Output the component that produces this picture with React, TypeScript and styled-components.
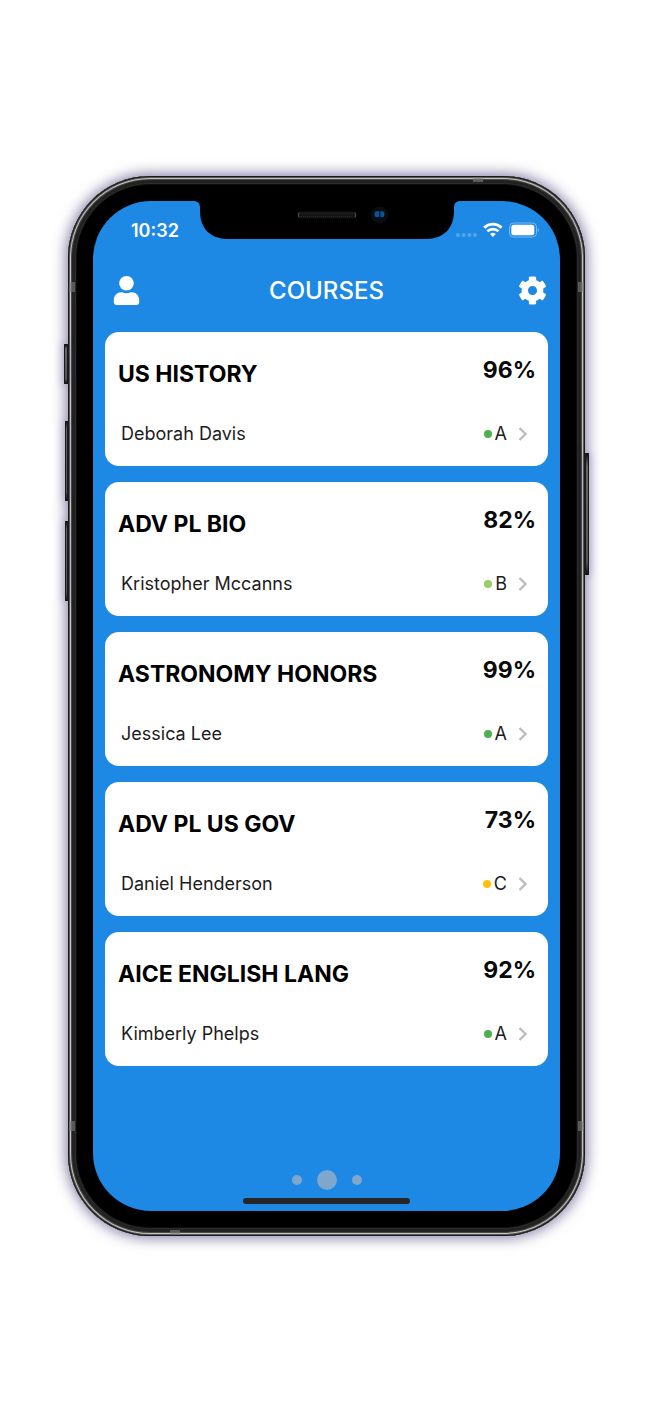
import React from "react";
import styled, { createGlobalStyle } from "styled-components";
import { FaCog, FaUser } from "react-icons/fa";

const GlobalStyle = createGlobalStyle`
  *, *::before, *::after { box-sizing: border-box; }
  body {
    margin: 0;
    background: #fff;
    font-family: Inter, "Liberation Sans", sans-serif;
    -webkit-font-smoothing: antialiased;
  }
`;

const Page = styled.div`
  padding: 176px 67px 175px 68px;
`;

const Phone = styled.div`
  position: relative;
  padding: 25px;
  border-radius: 82px;
  background: #000;
  box-shadow:
    inset 0 0 0 1px #1a1a1a,
    inset 0 0 0 2px #5a5a5a,
    inset 0 0 0 3px #c4c3bd,
    inset 0 0 0 4px #4a4a48,
    inset 0 0 0 7px #222,
    inset 0 0 0 8px #2c2c2c,
    inset 0 0 0 9px #0c0c0c,
    0 0 14px 2px rgba(50, 35, 100, 0.6);
`;

const SideKey = styled.span<{ $side: "left" | "right"; $top: number; $length: number; $depth: number }>`
  position: absolute;
  ${(p) => p.$side}: -${(p) => p.$depth}px;
  top: ${(p) => p.$top}px;
  width: ${(p) => p.$depth}px;
  height: ${(p) => p.$length}px;
  border: 1px solid #1a1a1a;
  background: linear-gradient(#111, #666 10%, #555 90%, #111);
  box-shadow: 0 0 10px rgba(60, 45, 110, 0.4);
`;

const Antenna = styled.span<{ $edge: "left" | "right" | "top" | "bottom"; $offset: number }>`
  position: absolute;
  background: rgba(120, 120, 120, 0.65);
  ${(p) => p.$edge}: 1px;
  ${(p) =>
    p.$edge === "left" || p.$edge === "right"
      ? `top: ${p.$offset}px; width: 6px; height: 10px;`
      : `left: ${p.$offset}px; width: 10px; height: 5px;`}
`;

const Screen = styled.main`
  position: relative;
  display: flex;
  flex-direction: column;
  padding: 0 12px;
  border-radius: 58px;
  background: #1e88e5;
  overflow: hidden;
`;

const Notch = styled.svg`
  position: absolute;
  top: 0;
  left: 50%;
  width: 268px;
  height: 38px;
  margin-left: -134px;
`;

const StatusBar = styled.div`
  display: flex;
  align-items: center;
  justify-content: space-between;
  height: 58px;
  padding: 0 9px 0 26px;
  color: #fff;
`;

const Clock = styled.time`
  padding-top: 2px;
  font-size: 18px;
  font-weight: 600;
  line-height: 24px;
`;

const StatusIcons = styled.svg`
  width: 84px;
  height: 18px;
`;

const Header = styled.header`
  display: grid;
  grid-template-columns: 1fr auto 1fr;
  align-items: center;
  height: 62px;
  padding: 0 1px;
  color: #fff;
`;

const IconButton = styled.button<{ $end?: boolean }>`
  display: flex;
  justify-self: ${(p) => (p.$end ? "end" : "start")};
  padding: 0 0 0 6px;
  border: 0;
  background: none;
  color: inherit;
  cursor: pointer;
`;

const Title = styled.h1`
  margin: 0;
  padding-top: 2px;
  font-size: 24px;
  font-weight: 500;
  line-height: 32px;
`;

const CourseList = styled.ul`
  display: flex;
  flex-direction: column;
  gap: 16px;
  margin: 0;
  padding: 11px 0 0;
  list-style: none;
`;

const CourseCard = styled.a`
  display: flex;
  flex-direction: column;
  justify-content: space-between;
  height: 134px;
  padding: 22px 12px 20px 13px;
  border-radius: 14px;
  background: #fff;
  color: #000;
  text-decoration: none;
`;

const CardRow = styled.div`
  display: flex;
  justify-content: space-between;
`;

const CourseName = styled.h2`
  margin: 4px 0 0;
  font-size: 23px;
  font-weight: 700;
  line-height: 32px;
`;

const Percent = styled.strong`
  font-size: 23px;
  font-weight: 700;
  line-height: 32px;
  color: #0a0a0a;
`;

const Teacher = styled.span`
  padding-left: 3px;
  font-size: 18px;
  line-height: 24px;
  color: #1c1c1c;
`;

const Grade = styled.span`
  display: flex;
  align-items: center;
  padding-right: 8px;
  font-size: 18px;
  line-height: 24px;
  color: #1c1c1c;
`;

const GradeDot = styled.span<{ $color: string }>`
  width: 8px;
  height: 8px;
  margin-right: 3px;
  border-radius: 50%;
  background: ${(p) => p.$color};
`;

const Chevron = styled.svg`
  width: 10px;
  height: 14px;
  margin-left: 11px;
`;

const Pager = styled.nav`
  display: flex;
  align-items: center;
  justify-content: center;
  gap: 15px;
  margin-top: 104px;
`;

const PageDot = styled.button<{ $active?: boolean }>`
  width: ${(p) => (p.$active ? 20 : 10)}px;
  height: ${(p) => (p.$active ? 20 : 10)}px;
  padding: 0;
  border: 0;
  border-radius: 50%;
  background: #7fa7cd;
`;

const HomeIndicator = styled.div`
  align-self: center;
  width: 167px;
  height: 6px;
  margin: 8px 0 7px;
  border-radius: 3px;
  background: #262626;
`;

const courses = [
  { name: "US HISTORY", teacher: "Deborah Davis", percent: 96, grade: "A", color: "#4caf50" },
  { name: "ADV PL BIO", teacher: "Kristopher Mccanns", percent: 82, grade: "B", color: "#9ccc65" },
  { name: "ASTRONOMY HONORS", teacher: "Jessica Lee", percent: 99, grade: "A", color: "#4caf50" },
  { name: "ADV PL US GOV", teacher: "Daniel Henderson", percent: 73, grade: "C", color: "#ffc107" },
  { name: "AICE ENGLISH LANG", teacher: "Kimberly Phelps", percent: 92, grade: "A", color: "#4caf50" },
];

export default function App() {
  return (
    <>
      <GlobalStyle />
      <Page>
        <Phone>
          <SideKey $side="left" $top={168} $length={40} $depth={4} />
          <SideKey $side="left" $top={245} $length={80} $depth={3} />
          <SideKey $side="left" $top={345} $length={80} $depth={3} />
          <SideKey $side="right" $top={277} $length={122} $depth={4} />
          <Antenna $edge="left" $offset={106} />
          <Antenna $edge="right" $offset={106} />
          <Antenna $edge="left" $offset={945} />
          <Antenna $edge="right" $offset={945} />
          <Antenna $edge="top" $offset={405} />
          <Antenna $edge="bottom" $offset={102} />
          <Screen>
            <StatusBar>
              <Clock>10:32</Clock>
              <StatusIcons viewBox="0 0 84 18" role="img" aria-label="Wi-Fi connected, battery full">
                <g fill="#fff" fillOpacity="0.25">
                  <circle cx="3" cy="14" r="2" />
                  <circle cx="8.7" cy="14" r="2" />
                  <circle cx="14.4" cy="14" r="2" />
                  <circle cx="20" cy="14" r="2" />
                </g>
                <g fill="none" stroke="#fff" strokeWidth="2.8">
                  <path d="M29.2 6.6a12.800 12.800 0 0 1 17.400 0" />
                  <path d="M32.300 10.200a8.300 8.300 0 0 1 11.200 0" />
                </g>
                <path d="M37.900 16l-2.800-2.900a4.200 4.200 0 0 1 5.600 0z" fill="#fff" />
                <rect x="54.5" y="2" width="27" height="14" rx="4" fill="none" stroke="#fff" strokeOpacity="0.4" />
                <rect x="56.300" y="3.800" width="23" height="10.400" rx="2.500" fill="#fff" />
                <path d="M82.600 7v4c1.600-.8 1.600-3.200 0-4z" fill="#fff" fillOpacity="0.4" />
              </StatusIcons>
            </StatusBar>
            <Notch viewBox="0 0 268 38" aria-hidden="true">
              <path d="M0 0h268c-5 0-7 2-7 7v3c0 17-10 28-28 28H35C17 38 7 27 7 10V7c0-5-2-7-7-7z" fill="#000" />
              <rect x="105" y="10.500" width="58" height="7" rx="3" fill="#141414" />
              <path d="M107 12.500h54M108 15.500h52" stroke="#262626" strokeDasharray="1 1" />
              <path d="M106 11.500q-1.500 2.500 0 5M162 11.500q1.500 2.500 0 5" fill="none" stroke="#555" />
              <circle cx="186.5" cy="14" r="8.5" fill="#0b0c0e" />
              <circle cx="186.5" cy="14" r="5" fill="#03102a" />
              <path d="M186 10v6h-3.500q-2-3 0-5.500zM187.500 10v6h3q2-3 0-5.500z" fill="#0a5796" />
            </Notch>
            <Header>
              <IconButton aria-label="Profile">
                <FaUser size={29} />
              </IconButton>
              <Title>COURSES</Title>
              <IconButton aria-label="Settings" $end>
                <FaCog size={29} />
              </IconButton>
            </Header>
            <CourseList>
              {courses.map((c) => (
                <li key={c.name}>
                  <CourseCard href="#">
                    <CardRow>
                      <CourseName>{c.name}</CourseName>
                      <Percent>{c.percent}%</Percent>
                    </CardRow>
                    <CardRow>
                      <Teacher>{c.teacher}</Teacher>
                      <Grade>
                        <GradeDot $color={c.color} />
                        {c.grade}
                        <Chevron viewBox="0 0 10 14" aria-hidden="true">
                          <path d="M1.5 1l6 6-6 6" fill="none" stroke="#bdbdbd" strokeWidth="2.4" />
                        </Chevron>
                      </Grade>
                    </CardRow>
                  </CourseCard>
                </li>
              ))}
            </CourseList>
            <Pager aria-label="Pages">
              <PageDot aria-label="Page 1" />
              <PageDot aria-label="Page 2" aria-current="page" $active />
              <PageDot aria-label="Page 3" />
            </Pager>
            <HomeIndicator />
          </Screen>
        </Phone>
      </Page>
    </>
  );
}
